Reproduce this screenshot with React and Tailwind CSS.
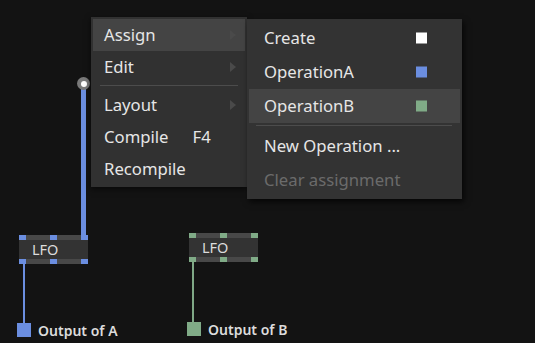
import React from 'react'

const font = { fontFamily: '"Noto Sans", "Open Sans", sans-serif' }

function Arrow() {
  return (
    <svg width="6" height="10" viewBox="0 0 6 10" className="absolute right-[9px] top-1/2 -translate-y-1/2">
      <path d="M0 0 L6 5 L0 10 Z" fill="#4a4a4a" />
    </svg>
  )
}

function MenuItem({ label, active, arrow, shortcut, swatch, disabled, tall }) {
  return (
    <div
      className={`relative flex items-center ${tall ? 'h-[34px] pl-[15px]' : 'h-8 pl-[11px]'} pr-3 text-[16.7px] ${active ? 'bg-[#444444]' : ''} ${disabled ? 'text-[#6b6b6b]' : 'text-[#e6e6e6]'}`}
    >
      <span>{label}</span>
      {shortcut && <span className="ml-[24px]">{shortcut}</span>}
      {swatch && <span className={`absolute right-[33px] top-1/2 -translate-y-1/2 w-[11px] h-[11px] ${swatch}`} />}
      {arrow && <Arrow />}
    </div>
  )
}

function Separator({ className }) {
  return <div className={`h-px bg-[#4c4c4c] mt-[2px] mb-[3px] ${className}`} />
}

function LfoNode({ left, top, pin }) {
  return (
    <div className="absolute w-[69px] h-[29px] bg-[#333333]" style={{ left, top }}>
      <div className="flex justify-between h-[5px] bg-[#484848]">
        <span className={`w-[7px] ${pin}`} />
        <span className={`w-[7px] ${pin}`} />
        <span className={`w-[7px] ${pin}`} />
      </div>
      <div className="h-[19px] pl-[13px] flex items-center text-[14.5px] text-[#dcdcdc]">LFO</div>
      <div className="flex justify-between h-[5px] bg-[#484848]">
        <span className={`w-[7px] ${pin}`} />
        <span className={`w-[7px] ${pin}`} />
        <span className={`w-[7px] ${pin}`} />
      </div>
    </div>
  )
}

export default function App() {
  return (
    <div className="relative w-[535px] h-[343px] bg-[#131313] overflow-hidden" style={font}>
      {/* wires */}
      <div className="absolute left-[81px] top-[84px] w-[5px] h-[152px] bg-[#6b8ee0]" />
      <div className="absolute left-[77px] top-[77px] w-[13px] h-[13px] rounded-full bg-[#7a7a7a] flex items-center justify-center">
        <div className="w-[6px] h-[6px] rounded-full bg-white" />
      </div>
      <div className="absolute left-[23px] top-[264px] w-[2px] h-[60px] bg-[#6b8ee0]" />
      <div className="absolute left-[192px] top-[262px] w-[2px] h-[61px] bg-[#7fa886]" />

      <LfoNode left={19} top={235} pin="bg-[#6b8ee0]" />
      <LfoNode left={189} top={233} pin="bg-[#80ab87]" />

      {/* outputs */}
      <div className="absolute left-[17px] top-[323px] h-[14px] flex items-center gap-[7px]">
        <span className="w-[14px] h-[14px] bg-[#6b8ee0]" />
        <span className="text-[14px] font-semibold text-[#dcdcdc]">Output of A</span>
      </div>
      <div className="absolute left-[187px] top-[322px] h-[14px] flex items-center gap-[7px]">
        <span className="w-[14px] h-[14px] bg-[#80ab87]" />
        <span className="text-[14px] font-semibold text-[#dcdcdc]">Output of B</span>
      </div>

      {/* main context menu */}
      <div className="absolute left-[91px] top-[17px] w-[156px] h-[170px] bg-[#313131] p-[2px] shadow-[0_2px_6px_rgba(0,0,0,0.6)]">
        <MenuItem label="Assign" active arrow />
        <MenuItem label="Edit" arrow />
        <Separator className="mx-[7px]" />
        <MenuItem label="Layout" arrow />
        <MenuItem label="Compile" shortcut="F4" />
        <MenuItem label="Recompile" />
      </div>

      {/* submenu */}
      <div className="absolute left-[247px] top-[19px] w-[215px] h-[180px] bg-[#333333] p-[2px] shadow-[2px_3px_6px_rgba(0,0,0,0.7)]">
        <MenuItem tall label="Create" swatch="bg-white" />
        <MenuItem tall label="OperationA" swatch="bg-[#6b8ee0]" />
        <MenuItem tall label="OperationB" active swatch="bg-[#80ab87]" />
        <Separator className="ml-[7px] mr-[8px]" />
        <MenuItem tall label="New Operation ..." />
        <MenuItem tall label="Clear assignment" disabled />
      </div>
    </div>
  )
}
